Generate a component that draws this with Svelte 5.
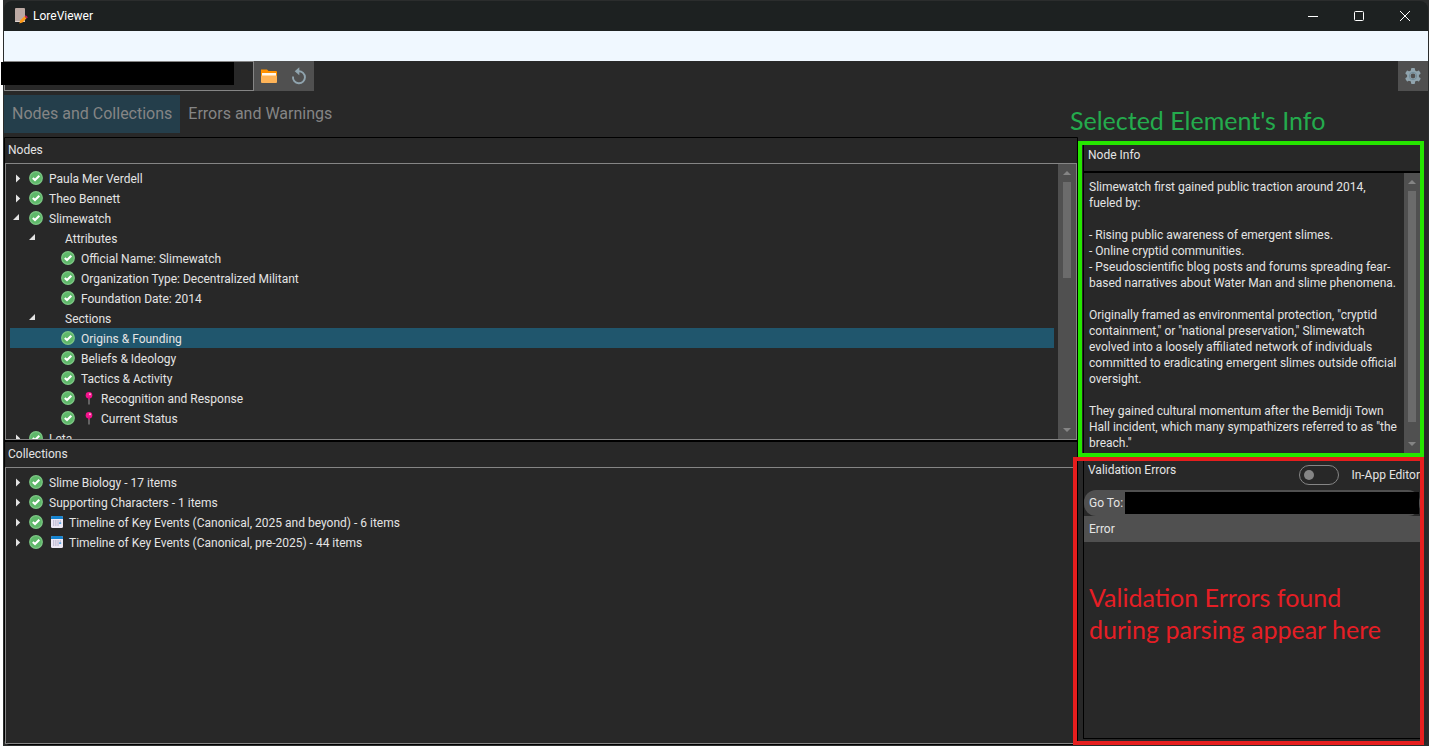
<script>
  const nodes = [
    { level: 0, state: 'closed', ok: true, label: 'Paula Mer Verdell' },
    { level: 0, state: 'closed', ok: true, label: 'Theo Bennett' },
    { level: 0, state: 'open', ok: true, label: 'Slimewatch' },
    { level: 1, state: 'open', label: 'Attributes' },
    { level: 2, ok: true, label: 'Official Name: Slimewatch' },
    { level: 2, ok: true, label: 'Organization Type: Decentralized Militant' },
    { level: 2, ok: true, label: 'Foundation Date: 2014' },
    { level: 1, state: 'open', label: 'Sections' },
    { level: 2, ok: true, label: 'Origins & Founding', selected: true },
    { level: 2, ok: true, label: 'Beliefs & Ideology' },
    { level: 2, ok: true, label: 'Tactics & Activity' },
    { level: 2, ok: true, extra: 'pin', label: 'Recognition and Response' },
    { level: 2, ok: true, extra: 'pin', label: 'Current Status' },
    { level: 0, state: 'closed', ok: true, label: 'Leta' }
  ];

  const collections = [
    { level: 0, state: 'closed', ok: true, label: 'Slime Biology - 17 items' },
    { level: 0, state: 'closed', ok: true, label: 'Supporting Characters - 1 items' },
    { level: 0, state: 'closed', ok: true, extra: 'calendar', label: 'Timeline of Key Events (Canonical, 2025 and beyond) - 6 items' },
    { level: 0, state: 'closed', ok: true, extra: 'calendar', label: 'Timeline of Key Events (Canonical, pre-2025) - 44 items' }
  ];

  const info = `Slimewatch first gained public traction around 2014, fueled by:

- Rising public awareness of emergent slimes.
- Online cryptid communities.
- Pseudoscientific blog posts and forums spreading fear-based narratives about Water Man and slime phenomena.

Originally framed as environmental protection, "cryptid containment," or "national preservation," Slimewatch evolved into a loosely affiliated network of individuals committed to eradicating emergent slimes outside official oversight.

They gained cultural momentum after the Bemidji Town Hall incident, which many sympathizers referred to as "the breach."`;
</script>

{#snippet row(item)}
  <li class="row level-{item.level}" class:selected={item.selected}>
    <span class="twist">
      {#if item.state === 'closed'}
        <svg width="16" height="12" viewBox="0 0 16 12"><path d="M6 2.500 10.200 6.500 6 10.500Z" fill="#e4e4e4" /></svg>
      {:else if item.state === 'open'}
        <svg width="16" height="12" viewBox="0 0 16 12"><path d="M9 2V8H3Z" fill="#e4e4e4" /></svg>
      {/if}
    </span>
    <span class="status">
      {#if item.ok}
        <svg width="14" height="14" viewBox="0 0 14 14">
          <circle cx="7" cy="7" r="6.300" fill="#5fb86a" stroke="#7cc784" stroke-width="1.200" />
          <path d="M3.800 7 6 9 10.300 4.700" fill="none" stroke="#fff" stroke-width="2.100" />
        </svg>
      {/if}
    </span>
    {#if item.extra === 'pin'}
      <span class="extra">
        <svg width="14" height="14" viewBox="0 0 14 14">
          <path d="M7 6V13.500" stroke="#8b8b8b" stroke-width="1.200" />
          <circle cx="7" cy="4.200" r="3.300" fill="#f5128c" />
          <path d="M6 6.500H8V8.500H6Z" fill="#d80c7a" />
          <circle cx="8" cy="3.200" r="1" fill="#ffb3da" />
        </svg>
      </span>
    {:else if item.extra === 'calendar'}
      <span class="extra">
        <svg width="14" height="14" viewBox="0 0 14 14">
          <rect x="1" y="1" width="12" height="12" rx="1.500" fill="#eeeaf6" />
          <path d="M1 4V2.500Q1 1 2.500 1H11.500Q13 1 13 2.500V4Z" fill="#1583cf" />
          <path d="M3 6H11M3 8H11M3 10H9" stroke="#9a93b3" stroke-width="1.200" stroke-dasharray="1.300 .9" />
          <path d="M9.200 7.300H11.200V9H9.200Z" fill="#55a8e2" />
        </svg>
      </span>
    {/if}
    <span class="label">{item.label}</span>
  </li>
{/snippet}

{#snippet scrollbar(size)}
  <div class="scrollbar {size}" aria-hidden="true">
    <svg width="8" height="4" viewBox="0 0 8 4"><path d="M4 0 8 4H0Z" fill="#858585" /></svg>
    <div class="track"><div class="thumb"></div></div>
    <svg width="8" height="4" viewBox="0 0 8 4"><path d="M0 0H8L4 4Z" fill="#858585" /></svg>
  </div>
{/snippet}

<div class="window">
  <header class="titlebar">
    <svg class="logo" width="14" height="16" viewBox="0 0 14 16">
      <rect x="1" y="0" width="10" height="14" rx="1" fill="#bcaaa4" />
      <path d="M1 13.300H11V14H1Z" fill="#efe9e6" />
      <path d="M5.300 15.500 6.200 12.500 10.500 8.300 12.500 10.300 8.500 14.500Z" fill="#ff9a17" />
      <path d="M10.700 8.300 11.700 7.300 13.800 9.300 12.800 10.300Z" fill="#d81b60" />
    </svg>
    <h1>LoreViewer</h1>
    <div class="controls">
      <button aria-label="Minimize"><svg width="12" height="12" viewBox="0 0 12 12"><path d="M1 6.500H11" stroke="#fff" /></svg></button>
      <button aria-label="Maximize"><svg width="12" height="12" viewBox="0 0 12 12"><rect x="1.500" y="1.500" width="9" height="9" rx="1" fill="none" stroke="#fff" /></svg></button>
      <button aria-label="Close"><svg width="12" height="12" viewBox="0 0 12 12"><path d="M1 1 11 11M11 1 1 11" stroke="#fff" /></svg></button>
    </div>
  </header>

  <div class="menubar"></div>

  <div class="toolbar">
    <div class="path">
      <input type="text" aria-label="Lore folder" />
      <div class="redacted"></div>
    </div>
    <button class="tool" aria-label="Open folder">
      <svg width="18" height="16" viewBox="0 0 18 16">
        <path d="M1 1.500H7L8.500 3H16Q17 3 17 4V12H1Z" fill="#ff9100" />
        <rect x="2" y="5" width="14" height="5" fill="#fff8ee" />
        <rect x="1" y="7.500" width="16" height="7.500" rx="1" fill="#ffb458" />
      </svg>
    </button>
    <button class="tool" aria-label="Reload">
      <svg width="16" height="18" viewBox="0 0 16 18">
        <path d="M2 9.500A6 6 0 1 0 7.500 4.300" fill="none" stroke="#90a4ae" stroke-width="1.900" />
        <path d="M8.300 .3V8.300L3.700 4.300Z" fill="#90a4ae" />
      </svg>
    </button>
    <button class="tool settings" aria-label="Settings">
      <svg width="18" height="18" viewBox="0 0 18 18">
        <g fill="#90a4ae">
          <rect x="7" y="1" width="4" height="16" rx="1" />
          <rect x="7" y="1" width="4" height="16" rx="1" transform="rotate(60 9 9)" />
          <rect x="7" y="1" width="4" height="16" rx="1" transform="rotate(120 9 9)" />
          <circle cx="9" cy="9" r="6" />
        </g>
        <circle cx="9" cy="9" r="3.700" fill="none" stroke="#728d9b" />
        <circle cx="9" cy="9" r="2.400" fill="#505050" />
      </svg>
    </button>
  </div>

  <nav class="tabs">
    <button class="tab active">Nodes and Collections</button>
    <button class="tab">Errors and Warnings</button>
  </nav>

  <main>
    <div class="trees">
      <section class="pane">
        <h2>Nodes</h2>
        <div class="box">
          <ul>{#each nodes as item}{@render row(item)}{/each}</ul>
          {@render scrollbar('third')}
        </div>
      </section>
      <section class="pane">
        <h2>Collections</h2>
        <div class="box">
          <ul>{#each collections as item}{@render row(item)}{/each}</ul>
        </div>
      </section>
    </div>

    <aside>
      <p class="note green">Selected Element's Info</p>
      <section class="info">
        <h2>Node Info</h2>
        <div class="reader">
          <p>{info}</p>
          {@render scrollbar('most')}
        </div>
      </section>
      <section class="errors">
        <div class="panel">
          <div class="head">
            <h2>Validation Errors</h2>
            <label class="switch"><input type="checkbox" /><span>In-App Editor</span></label>
          </div>
          <button class="goto"><span>Go To:</span><span class="redacted"></span></button>
          <table>
            <thead><tr><th>Error</th></tr></thead>
          </table>
          <p class="note red">Validation Errors found<br />during parsing appear here</p>
        </div>
      </section>
    </aside>
  </main>
</div>

<style>
  :global(body) {
    background: #2b2d2d;
  }
  * {
    box-sizing: border-box;
  }
  .window {
    display: flex;
    flex-direction: column;
    height: 100vh;
    padding: 1px 1px 1px 4px;
    box-shadow: inset 3px 0 #fff;
    color: #e4e4e4;
    font: 12px/16px Roboto, 'Open Sans', sans-serif;
  }
  h1, h2, p, ul {
    margin: 0;
    padding: 0;
    font-size: 12px;
    font-weight: 400;
  }
  button {
    border: 0;
    padding: 0;
    color: inherit;
    font: inherit;
    background: none;
  }
  svg {
    display: block;
    flex: none;
  }
  .titlebar {
    display: flex;
    align-items: center;
    flex: none;
    height: 30px;
    padding-left: 10px;
    gap: 5px;
    border-radius: 8px 8px 0 0;
    background: #1d2121;
    color: #fff;
  }
  .controls {
    display: flex;
    margin-left: auto;
  }
  .controls button {
    display: grid;
    place-items: center;
    width: 46px;
    height: 30px;
  }
  .menubar {
    flex: none;
    height: 30px;
    background: #f0f8ff;
  }
  .toolbar {
    display: flex;
    flex: none;
    height: 34px;
    padding-bottom: 4px;
    background: #282828;
  }
  .path {
    position: relative;
    width: 250px;
  }
  .path input {
    width: 100%;
    height: 30px;
    border: 1px solid #858585;
    padding: 0 6px;
    background: #282828;
    color: inherit;
  }
  .path .redacted {
    position: absolute;
    left: -3px;
    top: 1px;
    width: 233px;
    height: 23px;
    background: #000;
  }
  .tool {
    display: grid;
    place-items: center;
    width: 30px;
    height: 30px;
    background: #505050;
  }
  .settings {
    margin-left: auto;
  }
  .tabs {
    display: flex;
    flex: none;
    background: #282828;
  }
  .tab {
    height: 38px;
    padding: 0 8px;
    color: #858585;
    font-size: 16px;
    white-space: nowrap;
  }
  .tab.active {
    background: #243e4b;
  }
  main {
    display: grid;
    grid-template-columns: minmax(0, 1074fr) minmax(0, 350fr);
    flex: 1;
    min-height: 0;
    padding-top: 4px;
    border-radius: 0 0 8px 8px;
    background: #282828;
  }
  .trees {
    display: flex;
    flex-direction: column;
    min-height: 0;
    border: 1px solid #000;
    border-bottom-left-radius: 6px;
  }
  .pane {
    display: flex;
    flex-direction: column;
    flex: 1 1 0;
    min-height: 0;
  }
  .pane + .pane {
    border-top: 2px solid #000;
  }
  .pane h2 {
    padding: 4px 3px 5px;
  }
  .box {
    display: flex;
    flex: 1;
    min-height: 0;
    overflow: hidden;
    border: 1px solid #858585;
  }
  ul {
    flex: 1;
    padding: 4px;
    list-style: none;
  }
  .row {
    display: flex;
    align-items: center;
    height: 20px;
    white-space: nowrap;
  }
  .row.selected {
    background: #20566d;
  }
  .level-1 {
    padding-left: 16px;
  }
  .level-2 {
    padding-left: 32px;
  }
  .label {
    padding-top: 2px;
  }
  .twist {
    width: 16px;
  }
  .status {
    width: 14px;
    margin: 0 6px 0 3px;
  }
  .extra {
    width: 14px;
    margin: 0 5px 0 1px;
  }
  .scrollbar {
    display: flex;
    flex-direction: column;
    align-items: center;
    flex: none;
    width: 18px;
    padding: 7px 0;
    gap: 7px;
    background: #505050;
  }
  .track {
    flex: 1;
    width: 8px;
  }
  .thumb {
    height: 100%;
    background: #6b6b6b;
  }
  .third .thumb {
    height: 40%;
  }
  .most .thumb {
    height: 95%;
  }
  aside {
    position: relative;
    display: flex;
    flex-direction: column;
    min-height: 0;
    padding: 4px 4px 0 0;
  }
  .note {
    font: 25px/32px Lato, sans-serif;
    white-space: nowrap;
  }
  .note.green {
    position: absolute;
    left: -8px;
    top: -33px;
    color: #24ab4d;
  }
  .info {
    display: flex;
    flex-direction: column;
    flex: 316 1 0;
    min-height: 0;
    border: 4px solid #26e600;
  }
  .info h2 {
    margin-left: 1px;
    padding: 2px 4px 8px;
    border-bottom: 2px solid #000;
    border-left: 1px solid #000;
  }
  .reader {
    display: flex;
    flex: 1;
    min-height: 0;
    margin-left: 1px;
    overflow: hidden;
    border-left: 1px solid #000;
  }
  .reader p {
    flex: 1;
    padding: 6px 4px 0 5px;
    white-space: pre-wrap;
  }
  .reader .scrollbar {
    width: 16px;
  }
  .errors {
    flex: 288 1 0;
    min-height: 0;
    margin-left: -5px;
    border: 4px solid #e61e1e;
  }
  .panel {
    height: calc(100% - 2px);
    margin-left: 6px;
    overflow: hidden;
    border: solid #000;
    border-width: 0 0 1px 1px;
  }
  .head {
    display: flex;
    justify-content: space-between;
    height: 29px;
    padding: 1px 0 0 4px;
    white-space: nowrap;
  }
  .switch {
    display: flex;
    align-items: center;
    gap: 12px;
    padding-top: 2px;
    height: 24px;
  }
  .switch input {
    display: flex;
    align-items: center;
    width: 40px;
    height: 20px;
    margin: 0;
    padding: 0 4px;
    appearance: none;
    border: 1px solid #858585;
    border-radius: 10px;
  }
  .switch input::before {
    content: '';
    width: 10px;
    height: 10px;
    border-radius: 50%;
    background: #858585;
  }
  .goto {
    display: flex;
    align-items: center;
    gap: 2px;
    width: 100%;
    height: 26px;
    padding: 0 1px 0 5px;
    border-radius: 12px;
    background: #505050;
    white-space: nowrap;
  }
  .goto .redacted {
    flex: 1;
    height: 22px;
    background: #000;
  }
  table {
    width: 100%;
    border-collapse: collapse;
    background: #505050;
  }
  th {
    height: 26px;
    padding: 1px 5px 0;
    font-weight: 400;
    text-align: left;
  }
  .note.red {
    padding: 39px 5px 0;
    color: #e61e25;
  }
</style>
